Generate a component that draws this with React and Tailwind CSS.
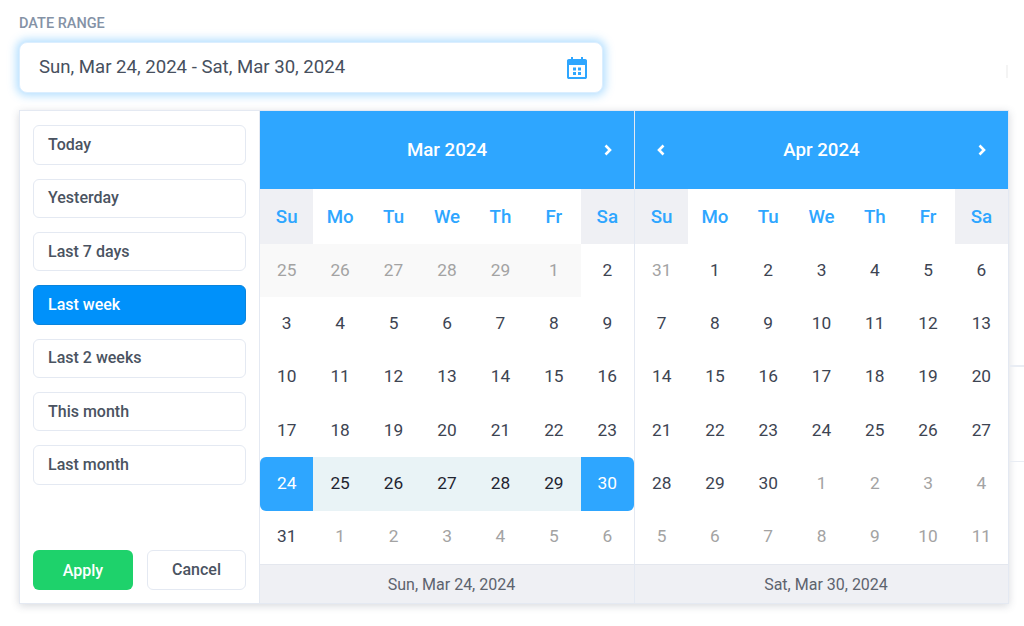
import React from "react";

const presets = ["Today", "Yesterday", "Last 7 days", "Last week", "Last 2 weeks", "This month", "Last month"];
const weekdays = ["Su", "Mo", "Tu", "We", "Th", "Fr", "Sa"];

const marStart = [25, 26, 27, 28, 29, 1];
const marDays = Array.from({ length: 30 }, (_, i) => i + 2);
const marEnd = [1, 2, 3, 4, 5, 6];
const aprDays = Array.from({ length: 30 }, (_, i) => i + 1);
const aprEnd = [1, 2, 3, 4, 5, 6, 7, 8, 9, 10, 11];

const march = [
  ...marStart.map((d) => ({ d, kind: "past" })),
  ...marDays.map((d) => {
    if (d === 24) return { d, kind: "start" };
    if (d === 30) return { d, kind: "end" };
    if (d > 24 && d < 30) return { d, kind: "range" };
    return { d, kind: "normal" };
  }),
  ...marEnd.map((d) => ({ d, kind: "muted" })),
];
const april = [
  { d: 31, kind: "muted" },
  ...aprDays.map((d) => ({ d, kind: "normal" })),
  ...aprEnd.map((d) => ({ d, kind: "muted" })),
];

const kindClass = {
  normal: "text-[#3d4452]",
  muted: "text-[#a3a3a3]",
  past: "text-[#a3a3a3] bg-[#f9f9f9]",
  range: "text-[#1f2430] bg-[#e9f3f6]",
  start: "text-white bg-[#2ea6ff] rounded-l-md",
  end: "text-white bg-[#2ea6ff] rounded-r-md",
};

function Chevron({ left }) {
  return (
    <svg width="10" height="12" viewBox="0 0 10 12" fill="none" className="block">
      <path
        d={left ? "M7.5 1.5 3 6l4.5 4.5" : "M2.5 1.5 7 6l-4.5 4.5"}
        stroke="#fff"
        strokeWidth="2.6"
      />
    </svg>
  );
}

function Month({ title, days, footer, prev, bordered }) {
  return (
    <div className={"flex flex-col w-[374px] " + (bordered ? "border-l border-[#e4e9f2]" : "")}>
      <div className="h-[78px] bg-[#2ea6ff] flex items-center justify-between px-[21px] text-white">
        <span className="w-[10px]">{prev && <Chevron left />}</span>
        <span className="text-[18.7px] font-medium">{title}</span>
        <Chevron />
      </div>
      <div className="grid grid-cols-7 h-[55px]">
        {weekdays.map((w, i) => (
          <div
            key={w}
            className={
              "flex items-center justify-center pt-[2px] text-[18.7px] font-medium text-[#2ea6ff] " +
              (i === 0 || i === 6 ? "bg-[#eff0f4]" : "")
            }
          >
            {w}
          </div>
        ))}
      </div>
      <div className="grid grid-cols-7 auto-rows-[53.33px]">
        {days.map((c, i) => (
          <div key={i} className={"flex items-center justify-center text-[17.3px] " + kindClass[c.kind]}>
            {c.d}
          </div>
        ))}
      </div>
      <div className="flex-1 bg-[#eff0f4] border-t border-[#e4e7ee] flex items-center justify-center pl-[9px] pt-[3px] text-[16px] text-[#5d636e]">
        {footer}
      </div>
    </div>
  );
}

export default function App() {
  return (
    <div className="relative w-[1024px] h-[626px] overflow-hidden bg-white font-['Roboto',sans-serif] pl-[19px]">
      <div className="pt-[16px] h-[42px] text-[14.5px] leading-[16px] font-medium text-[#8492a6] uppercase">Date range</div>
      <div className="w-[584px] h-[51px] rounded-lg bg-white border border-[#dbeeff] shadow-[0_0_8px_3px_rgba(46,166,255,0.35)] flex items-center justify-between pl-[19px] pr-[14px] text-[18.6px] text-[#47505e]">
        <span className="mt-[1px]">Sun, Mar 24, 2024 - Sat, Mar 30, 2024</span>
        <svg width="22" height="22" viewBox="0 0 22 22" fill="none">
          <path
            fillRule="evenodd"
            clipRule="evenodd"
            d="M5 0h2v2h8V0h2v2h2.200c.9 0 1.800.8 1.800 1.800v16.400c0 1-.9 1.800-1.800 1.800H2.800C1.900 22 1 21.200 1 20.200V3.800C1 2.800 1.900 2 2.800 2H5V0Zm-2 8v12h16V8H3Z"
            fill="#2ea6ff"
          />
          <rect x="7" y="10.500" width="3" height="3" fill="#2ea6ff" />
          <rect x="12" y="10.500" width="3" height="3" fill="#2ea6ff" />
          <rect x="7" y="15" width="3" height="3" fill="#2ea6ff" />
          <rect x="12" y="15" width="3" height="3" fill="#2ea6ff" />
        </svg>
      </div>

      <div className="mt-[17px] w-[990px] h-[494px] flex border border-[#e4e9f2] bg-white shadow-[0_2px_8px_rgba(60,70,90,0.2)]">
        <div className="w-[240px] border-r border-[#e4e9f2] px-[13px] pt-[14.2px] pb-[13px] flex flex-col">
          <div className="flex flex-col gap-[13.83px]">
            {presets.map((p) => (
              <div
                key={p}
                className={
                  "h-[39.5px] rounded-md border flex items-center pl-[14px] text-[16px] font-medium " +
                  (p === "Last week"
                    ? "bg-[#0091fa] border-[#0a84dc] text-white"
                    : "bg-white border-[#e4e9f2] text-[#4a5361]")
                }
              >
                {p}
              </div>
            ))}
          </div>
          <div className="mt-auto flex gap-[14px]">
            <div className="w-[100px] h-[40px] rounded-md bg-[#1ed26b] text-white flex items-center justify-center pt-px text-[16px] font-medium">
              Apply
            </div>
            <div className="w-[99px] h-[40px] rounded-md border border-[#e4e9f2] bg-white text-[#4a5361] flex items-center justify-center text-[16px] font-medium">
              Cancel
            </div>
          </div>
        </div>
        <Month title="Mar 2024" days={march} footer="Sun, Mar 24, 2024" />
        <Month title="Apr 2024" days={april} footer="Sat, Mar 30, 2024" prev bordered />
      </div>

      <div className="absolute left-[1006px] top-[65px] w-[2px] h-[13px] bg-[#f4f4f4]" />
      <div className="absolute left-[1010px] top-[365px] w-[14px] h-[2px] bg-[#e9edf4]" />
      <div className="absolute left-[1010px] top-[461px] w-[14px] h-px bg-[#e9edf4]" />
    </div>
  );
}
